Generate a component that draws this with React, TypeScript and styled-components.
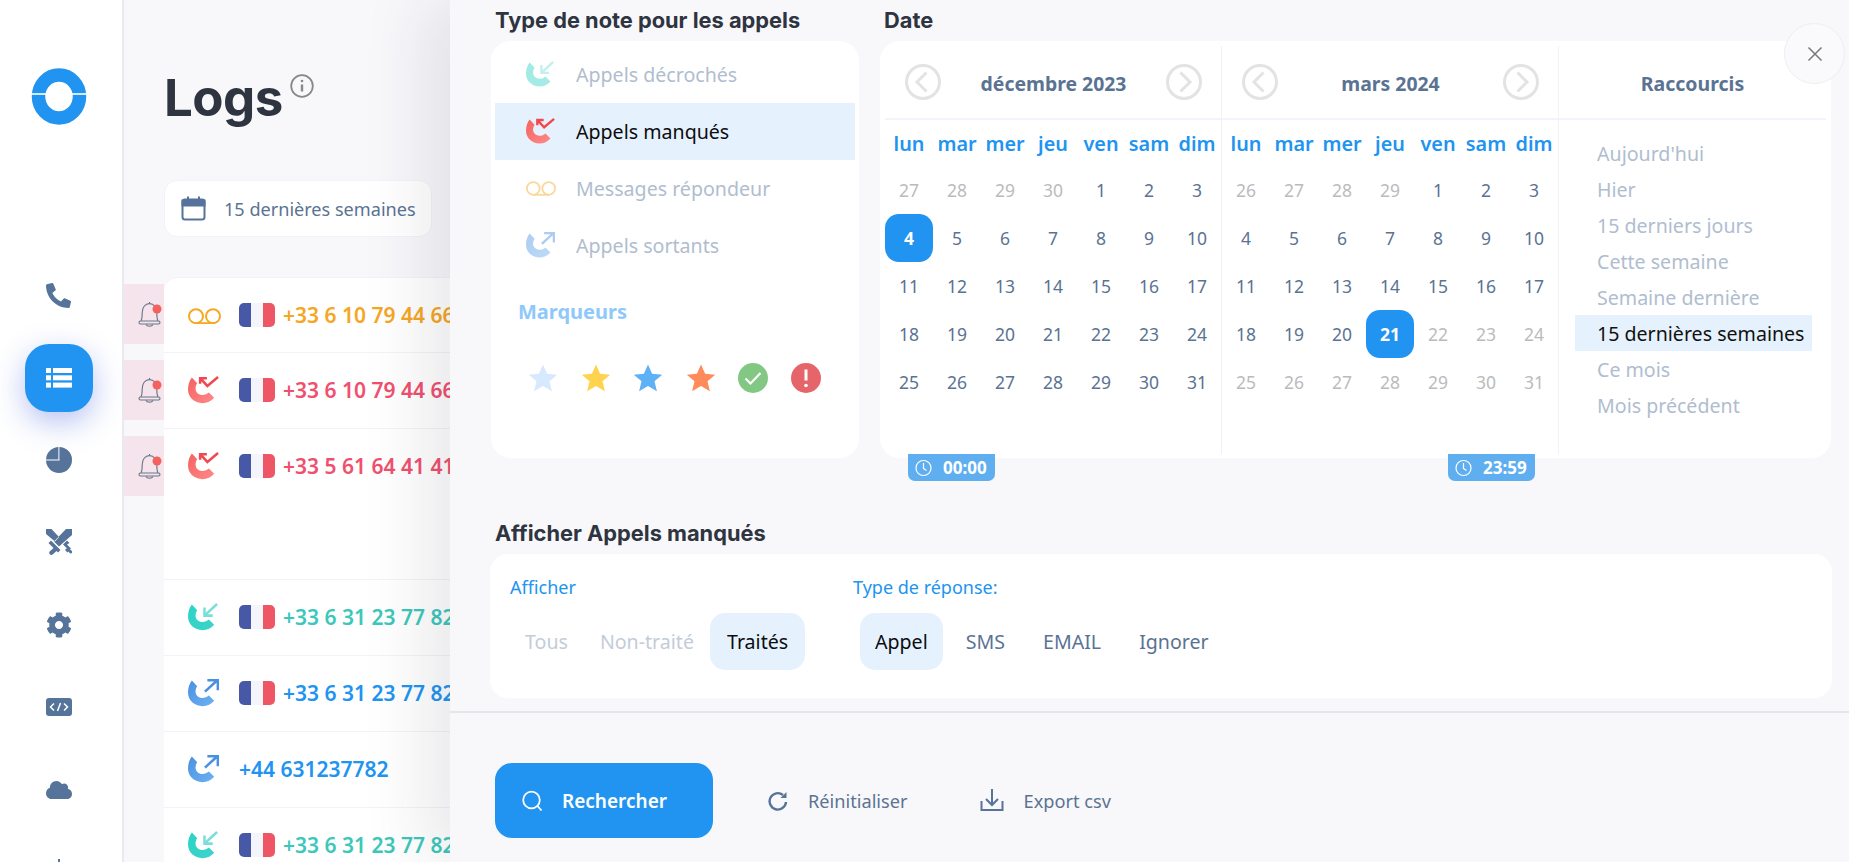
import React from "react";
import styled, { createGlobalStyle } from "styled-components";
import { FaPhoneAlt, FaCog, FaCloud } from "react-icons/fa";

const Global = createGlobalStyle`
  html, body { margin: 0; padding: 0; background: #f8f8fb; }
  * { box-sizing: border-box; }
  body { font-family: "Noto Sans", "Open Sans", sans-serif; color: #5a7393; }
`;

const Page = styled.div`
  position: relative; display: flex; width: 1849px; height: 862px; overflow: hidden; background: #f8f8fb;
`;
const Sidebar = styled.aside`
  flex: 0 0 124px; height: 862px; background: #fff; border-right: 2px solid #e9e9f0;
  display: flex; flex-direction: column; align-items: center; padding-right: 5px;
`;
const LogoBox = styled.div`margin-top: 68px; height: 57px; width: 56px; flex: none; svg { display: block; }`;
const NavList = styled.nav`margin-top: 129px; display: flex; flex-direction: column; align-items: center;`;
const NavItem = styled.div`
  flex: none; height: 82.4px; width: 68px; display: flex; align-items: center; justify-content: center; color: #56739a;
`;
const NavActive = styled.div`
  width: 68px; height: 68px; border-radius: 24px; background: #2094f0; display: flex; align-items: center; justify-content: center;
  box-shadow: 0 10px 30px rgba(65, 95, 220, .38);
`;

const Main = styled.main`flex: 1; min-width: 0; padding-left: 40px;`;
const TitleRow = styled.div`display: flex; align-items: flex-start; padding-top: 68px; height: 180px;`;
const Title = styled.h1`
  margin: 0; font-family: Inter, sans-serif; font-size: 51px; line-height: 60px; font-weight: 700; color: #2e3440; letter-spacing: -.5px;
`;
const InfoIcon = styled.svg`margin: 6px 0 0 7px; flex: none;`;
const FilterPill = styled.div`
  width: 268px; height: 57px; background: #fff; border: 1px solid #f2f2f7; border-radius: 13px; display: flex; align-items: center;
  padding-left: 16px; gap: 18px; font-size: 18.1px; color: #5a7393; white-space: nowrap;
`;
const LogList = styled.div`margin: 40px 0 0 -40px; width: 700px;`;
const LogRow = styled.div<{ $h?: number }>`
  display: flex; height: ${p => p.$h ?? 76}px;
`;
const BellSlot = styled.div`flex: 0 0 40px;`;
const BellTab = styled.div`
  height: 60px; margin-top: 7px; background: #f5e4ec; display: flex; align-items: center; justify-content: center; padding-left: 13px;
`;
const LogCell = styled.div<{ $first?: boolean }>`
  flex: 1; background: #fff; border-bottom: 1.5px solid #f2f3f9; ${p => p.$first ? "border-top: 1px solid #f2f3f9; border-top-left-radius: 14px;" : ""}
  display: flex; align-items: flex-start; padding: 23px 0 0 24px;
`;
const IconSlot = styled.div`flex: 0 0 51px; height: 30px; display: flex; align-items: center;`;
const Flag = styled.div`
  flex: none; width: 36px; height: 24px; border-radius: 5px; overflow: hidden; display: flex; margin-top: 2px; margin-right: 8px;
  background: linear-gradient(90deg, #4758a7 0 33%, #f4f4fb 33% 66%, #ef5665 66%);
`;
const Number = styled.span<{ $c: string }>`
  font-size: 21px; font-weight: 600; line-height: 28px; color: ${p => p.$c}; white-space: nowrap;
`;

const Panel = styled.section`
  position: absolute; left: 450px; top: 0; width: 1399px; height: 862px; background: #f8f8fb;
  box-shadow: -25px 0 60px rgba(40, 40, 60, .10);
`;
const TopRow = styled.div`display: flex; padding-left: 41px; gap: 21px;`;
const TypeColumn = styled.div`flex: 0 0 368px;`;
const DateColumn = styled.div`flex: 0 0 951px;`;
const SectionTitle = styled.h2`
  margin: 0; height: 41px; padding-left: 4px; font-family: Inter, sans-serif; font-size: 21.8px; line-height: 41px; font-weight: 700; color: #2e3440; white-space: nowrap;
`;
const Card = styled.div`background: #fff; border-radius: 20px;`;
const TypeCard = styled(Card)`height: 417px; padding: 5px 4px;`;
const TypeRow = styled.div<{ $on?: boolean }>`
  height: 57px; display: flex; align-items: center; padding-left: 31px; gap: 20px; font-size: 19.6px; white-space: nowrap;
  background: ${p => p.$on ? "#e5f2fd" : "transparent"}; color: ${p => p.$on ? "#0c0c10" : "#b0bdcf"};
`;
const RowIcon = styled.div<{ $on?: boolean }>`flex: 0 0 30px; display: flex; opacity: ${p => p.$on ? 1 : .45};`;
const MarkerTitle = styled.div`margin: 22px 0 0 23px; height: 32px; line-height: 32px; font-size: 20px; font-weight: 700; color: #8fc8fb;`;
const Markers = styled.div`display: flex; gap: 22.5px; margin: 35px 0 0 33px; svg { display: block; }`;

const DateCard = styled(Card)`position: relative; height: 417px; display: flex; padding: 5px 0 4px;`;
const Calendar = styled.div<{ $w: number; $pl: number }>`
  flex: 0 0 ${p => p.$w}px; padding-left: ${p => p.$pl}px; border-right: 1.5px solid #f0f2fa;
`;
const CalHead = styled.div`
  height: 74px; padding: 0 19px 0 20px; border-bottom: 2px solid #f2f3fb; display: flex; align-items: center; justify-content: space-between;
`;
const CalTitle = styled.div`font-size: 19.4px; font-weight: 700; color: #5a7393; white-space: nowrap; padding-top: 2px;`;
const ArrowBtn = styled.svg`flex: none; display: block;`;
const Grid = styled.div`display: grid; grid-template-columns: repeat(7, 48px); grid-template-rows: 46px; grid-auto-rows: 48px;`;
const WeekDay = styled.div`
  display: flex; align-items: center; justify-content: center; font-size: 19.8px; font-weight: 600; color: #2094f0; white-space: nowrap;
`;
const Day = styled.div<{ $state: "on" | "off" | "sel" }>`
  display: flex; align-items: center; justify-content: center; font-size: 17.5px; border-radius: 14px;
  color: ${p => p.$state === "sel" ? "#fff" : p.$state === "off" ? "#bbbbbb" : "#5a7393"};
  background: ${p => p.$state === "sel" ? "#2094f0" : "transparent"};
  font-weight: ${p => p.$state === "sel" ? 700 : 400};
`;
const Shortcuts = styled.div`flex: 1; padding-right: 5px;`;
const ShortHead = styled.div`
  height: 74px; border-bottom: 2px solid #f2f3fb; display: flex; align-items: center; justify-content: center; padding-top: 2px;
  font-size: 19.5px; font-weight: 700; color: #5a7393;
`;
const ShortList = styled.div`padding: 15px 0 0 16px;`;
const ShortItem = styled.div<{ $on?: boolean }>`
  width: 237px; height: 36px; line-height: 37px; padding-left: 22px; font-size: 19.6px; white-space: nowrap;
  background: ${p => p.$on ? "#e5f2fd" : "transparent"}; color: ${p => p.$on ? "#111" : "#b0bdcf"};
`;
const TimeBadge = styled.div<{ $left: number }>`
  position: absolute; left: ${p => p.$left}px; top: 413px; width: 87px; height: 27px; background: #5eaef0;
  border-radius: 0 0 7px 7px; display: flex; align-items: center; gap: 11px; padding-left: 7px;
  color: #fff; font-size: 17px; font-weight: 700;
`;

const Section = styled.div`margin: 55px 0 0 41px;`;
const ActionCard = styled(Card)`
  margin-left: -1px; width: 1342px; height: 144px; border-radius: 18px; padding: 20px 0 0 20px; display: flex;
`;
const Group = styled.div<{ $w?: number }>`flex: 0 0 ${p => p.$w ?? 343}px;`;
const GroupLabel = styled.div`height: 26px; line-height: 26px; font-size: 18px; color: #2094f0; white-space: nowrap;`;
const Tabs = styled.div<{ $gap: number; $ml: number }>`display: flex; gap: ${p => p.$gap}px; margin: 13px 0 0 ${p => p.$ml}px;`;
const Tab = styled.div<{ $tone: "on" | "dim" | "mid"; $px?: number }>`
  height: 57px; padding: 0 ${p => p.$px ?? 15}px; display: flex; align-items: center; font-size: 19.6px; border-radius: 15px; white-space: nowrap;
  background: ${p => p.$tone === "on" ? "#e5f2fd" : "transparent"};
  color: ${p => p.$tone === "on" ? "#0c0c10" : p.$tone === "dim" ? "#c3ccd8" : "#5a7393"};
`;
const Rule = styled.div`height: 2px; background: #e5e5ea; margin-top: 13px;`;
const Footer = styled.div`display: flex; align-items: center; padding: 50px 0 0 45px;`;
const SearchBtn = styled.div`
  width: 218px; height: 75px; border-radius: 17px; background: #2094f0; color: #fff; display: flex; align-items: center; padding-left: 27px; gap: 19px;
  font-size: 19px; font-weight: 600;
`;
const GhostBtn = styled.div<{ $ml: number }>`
  margin-left: ${p => p.$ml}px; display: flex; align-items: center; gap: 20px; font-size: 18.2px; color: #5a7393; white-space: nowrap;
`;
const CloseBtn = styled.div`
  position: absolute; left: 1334px; top: 23px; width: 61px; height: 61px; border-radius: 50%; background: #fafafc; border: 1px solid #eeeef3;
  display: flex; align-items: center; justify-content: center;
`;

type Kind = "in" | "miss" | "out";
const palette: Record<Kind, [string, string, string]> = {
  in: ["#2bd4c4", "#3fd2cb", "#7adfd8"],
  miss: ["#f4625f", "#ff8a8a", "#f2474f"],
  out: ["#4a90e2", "#6db2f0", "#4a90e2"],
};
const CallIcon = ({ kind, size = 31 }: { kind: Kind; size?: number }) => {
  const [a, b, c] = palette[kind];
  const id = `grad-${kind}`;
  return (
    <svg width={size} height={size * 0.94} viewBox="0 0 32 30" fill="none">
      <defs>
        <linearGradient id={id} x1="0" y1="0" x2="1" y2="1"><stop offset="0" stopColor={a} /><stop offset="1" stopColor={b} /></linearGradient>
      </defs>
      <path d="M4 1.500C1.500 4.500 0 9 0 14 0 22 6.600 28 15 28c5 0 9-2 12-5.500L21.500 17c-2 1.800-4 2.500-6.500 2.500-4 0-7.200-3-7.200-6.500 0-2 .7-4.200 1.700-5.500L4 1.500Z" fill={`url(#${id})`} />
      {kind === "in" && <path d="M30 1 17 13M17 4.500v8.500h8.500" stroke={c} strokeWidth="2.600" />}
      {kind === "out" && <path d="M17.500 13 30 1.500M20 1.200H30.800V11.500" stroke={c} strokeWidth="2.600" />}
      {kind === "miss" && <path d="M12.500 8V2.200H19.500M13 2.700l7 7.500L31 1" stroke={c} strokeWidth="2.600" />}
    </svg>
  );
};
const Voicemail = ({ w = 33 }: { w?: number }) => (
  <svg width={w} height={w * 0.5} viewBox="0 0 33 16.500" fill="none" stroke="#f7a823" strokeWidth="2">
    <circle cx="8" cy="8.200" r="7" /><circle cx="25" cy="8.200" r="7" /><path d="M8 15.200h17" />
  </svg>
);
const Bell = () => (
  <svg width="25" height="27" viewBox="0 0 25 27" fill="none" stroke="#6a7686" strokeWidth="1.100">
    <path d="M3 20c1-2 1.200-5 1.200-8C4.200 6.500 7 2.600 11.500 2.600S18.800 6.500 18.800 12c0 3 .2 6 1.200 8" />
    <rect x="1" y="20" width="21" height="3" rx="1.500" />
    <path d="M8 23.500c1 2.300 6 2.300 7 0M11.500 1v1.600" />
    <circle cx="19" cy="8" r="4.500" fill="#f4625f" stroke="none" />
  </svg>
);
const Star = ({ c }: { c: string }) => (
  <svg width="30" height="30" viewBox="0 0 30 30"><path d="M15 1.500l4.100 9.300 10.100.9-7.700 6.600 2.400 9.900L15 22.900l-8.900 5.300 2.400-9.900L.8 11.700l10.100-.9L15 1.500Z" fill={c} /></svg>
);
const Chevron = ({ dir }: { dir: "l" | "r" }) => (
  <ArrowBtn width="36" height="36" viewBox="0 0 36 36" fill="none" stroke="#e3e3e3" strokeWidth="3">
    <circle cx="18" cy="18" r="16.500" />
    <path d={dir === "l" ? "M21.500 8.500 12 18l9.500 9.500" : "M14.500 8.500 24 18l-9.500 9.500"} />
  </ArrowBtn>
);
const Clock = () => (
  <svg width="17" height="18" viewBox="0 0 17 18" fill="none" stroke="#fff" strokeWidth="1.200">
    <circle cx="8.500" cy="9" r="7.500" /><path d="M8.500 4v5.500l3 2" />
  </svg>
);

const decRows: [string, "on" | "off" | "sel"][] = [
  ...["27", "28", "29", "30"].map(d => [d, "off"] as [string, "off"]),
  ...Array.from({ length: 31 }, (_, i) => [String(i + 1), i === 3 ? "sel" : "on"] as [string, "on" | "sel"]),
];
const marRows: [string, "on" | "off" | "sel"][] = [
  ...["26", "27", "28", "29"].map(d => [d, "off"] as [string, "off"]),
  ...Array.from({ length: 31 }, (_, i) => [String(i + 1), i === 20 ? "sel" : i > 20 ? "off" : "on"] as [string, "on" | "off" | "sel"]),
];
const weekdays = ["lun", "mar", "mer", "jeu", "ven", "sam", "dim"];
const shortcuts = ["Aujourd'hui", "Hier", "15 derniers jours", "Cette semaine", "Semaine dernière", "15 dernières semaines", "Ce mois", "Mois précédent"];

const Month = ({ title, w, pl, days }: { title: string; w: number; pl: number; days: [string, "on" | "off" | "sel"][] }) => (
  <Calendar $w={w} $pl={pl}>
    <CalHead>
      <Chevron dir="l" />
      <CalTitle>{title}</CalTitle>
      <Chevron dir="r" />
    </CalHead>
    <Grid>
      {weekdays.map(d => <WeekDay key={d}>{d}</WeekDay>)}
      {days.map(([d, s], i) => <Day key={i} $state={s}>{d}</Day>)}
    </Grid>
  </Calendar>
);

const logs: { kind: Kind | "vm"; num: string; c: string; bell?: boolean; flag?: boolean; h?: number }[] = [
  { kind: "vm", num: "+33 6 10 79 44 66", c: "#f5a623", bell: true, flag: true },
  { kind: "miss", num: "+33 6 10 79 44 66", c: "#f0506e", bell: true, flag: true },
  { kind: "miss", num: "+33 5 61 64 41 41", c: "#f0506e", bell: true, flag: true, h: 151 },
  { kind: "in", num: "+33 6 31 23 77 82", c: "#3cc7bb", flag: true },
  { kind: "out", num: "+33 6 31 23 77 82", c: "#2094f0", flag: true },
  { kind: "out", num: "+44 631237782", c: "#2094f0" },
  { kind: "in", num: "+33 6 31 23 77 82", c: "#3cc7bb", flag: true },
];

export default function App() {
  return (
    <Page>
      <Global />
      <Sidebar>
        <LogoBox>
          <svg width="56" height="57" viewBox="0 0 56 57">
            <ellipse cx="28" cy="28.500" rx="20.500" ry="21.500" fill="none" stroke="#2094f0" strokeWidth="13.500" />
            <rect x="0" y="25" width="56" height="2" fill="#fff" opacity=".8" />
          </svg>
        </LogoBox>
        <NavList>
          <NavItem><FaPhoneAlt size={25} /></NavItem>
          <NavItem>
            <NavActive>
              <svg width="26" height="20" viewBox="0 0 26 20" fill="#fff">
                <rect x="0" y="0" width="5" height="5" /><rect x="7" y="0" width="19" height="5" />
                <rect x="0" y="7.300" width="5" height="5" /><rect x="7" y="7.300" width="19" height="5" />
                <rect x="0" y="14.600" width="5" height="5" /><rect x="7" y="14.600" width="19" height="5" />
              </svg>
            </NavActive>
          </NavItem>
          <NavItem>
            <svg width="26" height="26" viewBox="0 0 26 26">
              <circle cx="13" cy="13" r="13" fill="#56739a" />
              <path d="M13 0v13H0" fill="none" stroke="#fff" strokeWidth="1.200" />
              <path d="M13.600 .4V12.400H25.600A12.500 12.500 0 0 0 13.600 .4Z" fill="#56739a" />
            </svg>
          </NavItem>
          <NavItem>
            <svg width="26" height="26" viewBox="0 0 26 26" fill="#56739a">
              <path d="M0 0h5.500L13 8l-4 4.500L0 5V0ZM26 0h-6L8 12.500l5 5L26 6V0Z" />
              <path d="M2.500 14 5 11.500l9.500 9.500-2.500 2.500-1.500-1.500-3.800 3.500c-1 .8-2.300.3-2.900-.3-.6-.6-1-1.700-.1-2.600L7.500 19 2.500 14ZM23.500 14 21 11.500l-4 4 3.800 3.800L19 21l2.500 2.500 1-1 1.200 1.600c1 .8 1.700.5 2.100 0 .5-.5.700-1.500-.1-2.300L24 20.500l1-1L21 15.500Z" />
            </svg>
          </NavItem>
          <NavItem><FaCog size={26} /></NavItem>
          <NavItem>
            <svg width="26" height="18" viewBox="0 0 26 18">
              <rect width="26" height="18" rx="3" fill="#56739a" />
              <path d="M8 5.500 4.500 9 8 12.500M18 5.500 21.500 9 18 12.500M14.500 5l-3 8" fill="none" stroke="#fff" strokeWidth="1.500" />
            </svg>
          </NavItem>
          <NavItem><FaCloud size={26} /></NavItem>
          <NavItem>
            <svg width="26" height="26" viewBox="0 0 26 26" fill="#56739a"><rect x="12" y="0" width="2" height="26" /></svg>
          </NavItem>
        </NavList>
      </Sidebar>

      <Main>
        <TitleRow>
          <Title>Logs</Title>
          <InfoIcon width="24" height="24" viewBox="0 0 24 24" fill="none" stroke="#888" strokeWidth="1.800">
            <circle cx="12" cy="12" r="10.800" /><path d="M12 10.500v7" strokeWidth="2.400" /><circle cx="12" cy="7" r="1.300" fill="#888" stroke="none" />
          </InfoIcon>
        </TitleRow>
        <FilterPill>
          <svg width="25" height="25" viewBox="0 0 25 25" fill="none" stroke="#56739a" strokeWidth="2">
            <rect x="1.500" y="3.500" width="22" height="20" rx="2.500" />
            <path d="M1.500 4.500h22v5h-22z" fill="#56739a" /><path d="M7 .5v3M18 .5v3" />
          </svg>
          15 dernières semaines
        </FilterPill>
        <LogList>
          {logs.map((l, i) => (
            <LogRow key={i} $h={l.h}>
              <BellSlot>{l.bell && <BellTab><Bell /></BellTab>}</BellSlot>
              <LogCell $first={i === 0}>
                <IconSlot>{l.kind === "vm" ? <Voicemail /> : <CallIcon kind={l.kind} />}</IconSlot>
                {l.flag && <Flag />}
                <Number $c={l.c}>{l.num}</Number>
              </LogCell>
            </LogRow>
          ))}
        </LogList>
      </Main>

      <Panel>
        <TopRow>
          <TypeColumn>
            <SectionTitle>Type de note pour les appels</SectionTitle>
            <TypeCard>
              <TypeRow><RowIcon><CallIcon kind="in" size={29} /></RowIcon>Appels décrochés</TypeRow>
              <TypeRow $on><RowIcon $on><CallIcon kind="miss" size={29} /></RowIcon>Appels manqués</TypeRow>
              <TypeRow><RowIcon><Voicemail w={30} /></RowIcon>Messages répondeur</TypeRow>
              <TypeRow><RowIcon><CallIcon kind="out" size={29} /></RowIcon>Appels sortants</TypeRow>
              <MarkerTitle>Marqueurs</MarkerTitle>
              <Markers>
                <Star c="#d6e9fe" /><Star c="#ffd34d" /><Star c="#5fb1f6" /><Star c="#ff8a5c" />
                <svg width="30" height="30" viewBox="0 0 30 30"><circle cx="15" cy="15" r="15" fill="#82c884" /><path d="M7.500 15.500l5 5L22.500 10" fill="none" stroke="#fff" strokeWidth="2.200" /></svg>
                <svg width="30" height="30" viewBox="0 0 30 30"><circle cx="15" cy="15" r="15" fill="#e6656a" /><path d="M15 6.500v11" stroke="#fff" strokeWidth="3" /><circle cx="15" cy="22.500" r="1.800" fill="#fff" /></svg>
              </Markers>
            </TypeCard>
          </TypeColumn>
          <DateColumn>
            <SectionTitle>Date</SectionTitle>
            <DateCard>
              <Month title="décembre 2023" w={342} pl={5} days={decRows} />
              <Month title="mars 2024" w={336} pl={0} days={marRows} />
              <Shortcuts>
                <ShortHead>Raccourcis</ShortHead>
                <ShortList>
                  {shortcuts.map(s => <ShortItem key={s} $on={s === "15 dernières semaines"}>{s}</ShortItem>)}
                </ShortList>
              </Shortcuts>
              <TimeBadge $left={28}><Clock />00:00</TimeBadge>
              <TimeBadge $left={568}><Clock />23:59</TimeBadge>
            </DateCard>
          </DateColumn>
        </TopRow>

        <Section>
          <SectionTitle>Afficher Appels manqués</SectionTitle>
          <ActionCard>
            <Group>
              <GroupLabel>Afficher</GroupLabel>
              <Tabs $gap={0} $ml={-1}>
                <Tab $tone="dim" $px={16}>Tous</Tab><Tab $tone="dim" $px={16}>Non-traité</Tab><Tab $tone="on" $px={17}>Traités</Tab>
              </Tabs>
            </Group>
            <Group $w={500}>
              <GroupLabel>Type de réponse:</GroupLabel>
              <Tabs $gap={8} $ml={7}>
                <Tab $tone="on">Appel</Tab><Tab $tone="mid">SMS</Tab><Tab $tone="mid">EMAIL</Tab><Tab $tone="mid">Ignorer</Tab>
              </Tabs>
            </Group>
          </ActionCard>
        </Section>
        <Rule />
        <Footer>
          <SearchBtn>
            <svg width="21" height="22" viewBox="0 0 21 22" fill="none" stroke="#fff" strokeWidth="1.800"><circle cx="9.500" cy="10" r="8.300" /><path d="M15.500 16l4 4.500" /></svg>
            Rechercher
          </SearchBtn>
          <GhostBtn $ml={55}>
            <svg width="20" height="22" viewBox="0 0 20 22" fill="none" stroke="#56739a" strokeWidth="2.400">
              <path d="M18 12a8.200 8.200 0 1 1-3-7" /><path d="M18.500 2v6h-6z" fill="#56739a" stroke="none" />
            </svg>
            Réinitialiser
          </GhostBtn>
          <GhostBtn $ml={72}>
            <svg width="24" height="23" viewBox="0 0 24 23" fill="none" stroke="#56739a" strokeWidth="2">
              <path d="M12 0v15M6 10l6 6 6-6" /><path d="M1.500 12v9h21v-9" />
            </svg>
            Export csv
          </GhostBtn>
        </Footer>
        <CloseBtn>
          <svg width="16" height="16" viewBox="0 0 16 16" stroke="#777" strokeWidth="1.500"><path d="M1.500 1.500l13 13M14.500 1.500l-13 13" /></svg>
        </CloseBtn>
      </Panel>
    </Page>
  );
}
